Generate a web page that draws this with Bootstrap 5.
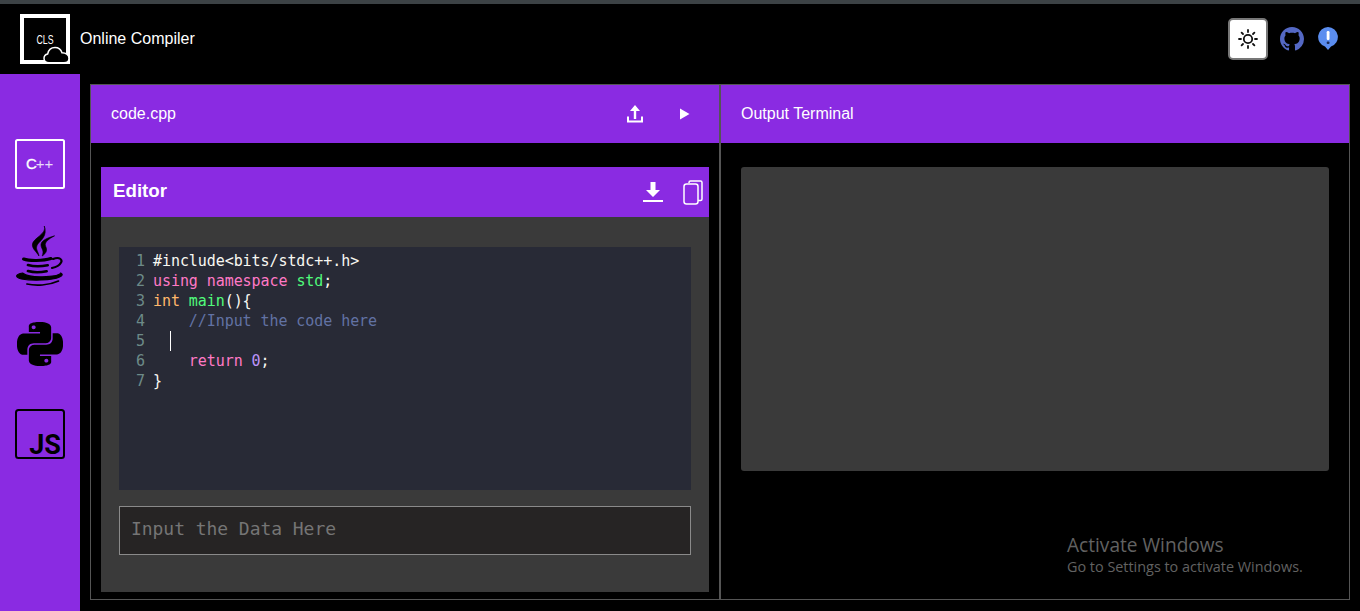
<!DOCTYPE html>
<html lang="en">
<head>
<meta charset="utf-8">
<title>Online Compiler</title>
<link href="https://cdn.jsdelivr.net/npm/bootstrap@5.3.0/dist/css/bootstrap.min.css" rel="stylesheet">
<style>
html,body{height:611px;overflow:hidden}
body{background:#000;color:#fff;font-family:"Liberation Sans",Arial,sans-serif;border-top:4px solid #3c4245}
.top-bar{height:70px;padding:0 21px 0 20px;background:#000}
.logo-box{width:50px;height:50px;display:block}
.brand-name{font-size:16px;color:#fff;margin-left:10px}
.theme-btn{width:40px;height:42px;background:#fff;border:2px solid #777;border-radius:5px;padding:0}
.head-gap{margin-left:12px}
.head-gap-b{margin-left:13px}
.side-rail{width:80px;background:#8a2be2;padding-top:65px}
.rail-item{height:90px}
.work-area{padding:10px 10px 11px 10px}
.pane{border:1px solid #555;width:630px;height:516px;position:relative}
.pane-head{height:58px;background:#8a2be2;font-size:16px;padding:0 20px}
.editor-box{margin:24px 10px 0;height:425px;background:#3a3a3a}
.editor-head{height:50px;background:#8a2be2;padding:0 6px 0 12px}
.editor-title{font-size:18.7px;font-weight:700;padding-bottom:2px}
.editor-body{padding:30px 18px 0}
.code-area{height:243px;background:#282a36;padding-top:4px;font-family:"DejaVu Sans Mono",monospace;font-size:15px;line-height:20px;letter-spacing:-.07px}
.gutter-nums{width:26px;margin-right:8px;text-align:right;color:#6d8a88}
.code-lines{color:#f8f8f2}
.code-line{height:20px;white-space:pre}
.tk-pink{color:#ff79c6}.tk-green{color:#50fa7b}.tk-orange{color:#ffb86c}.tk-comment{color:#6272a4}.tk-num{color:#bd93f9}
.caret-mark{display:inline-block;height:20px;border-left:1px solid #fff;margin-left:17px;vertical-align:top}
.data-input{display:block;width:100%;height:49px;margin-top:16px;background:#262424;border:1px solid #8a8a8a;border-radius:0;color:#fff;padding:0 11px 5px;font-family:"DejaVu Sans Mono",monospace;font-size:18px;letter-spacing:-.05px}
.data-input::placeholder{color:#757575;opacity:1}
.term-box{margin:24px 20px 0;height:304px;background:#3a3a3a;border-radius:3px}
.act-note{position:absolute;left:346px;top:449px;color:#626262;font-family:"Open Sans",sans-serif}
.act-one{font-size:19.1px;line-height:22px}
.act-two{font-size:14.4px;line-height:22px}
.icon-act{background:none;border:0;padding:0;line-height:0}
</style>
</head>
<body class="d-flex flex-column">
<header class="navbar top-bar flex-nowrap">
  <div class="d-flex align-items-center">
    <span class="logo-box">
      <svg width="50" height="50" viewBox="0 0 50 50">
        <rect x="2" y="2" width="46" height="46" fill="#000" stroke="#fff" stroke-width="4"/>
        <text x="25" y="30" font-size="13" fill="#fff" text-anchor="middle" font-family="Liberation Sans,sans-serif" textLength="17" lengthAdjust="spacingAndGlyphs">CLS</text>
        <path d="M29 48.800c-3 0-5-1.900-5-4.500 0-2.300 1.500-4 3.700-4.400.8-4 3.800-6.400 7.300-6.400 3.400 0 6 2 7 5.200 3.600-.1 7 2.300 7 5.500 0 2.700-2 4.600-5 4.600z" fill="#000" stroke="#fff" stroke-width="1.500"/>
      </svg>
    </span>
    <span class="brand-name">Online Compiler</span>
  </div>
  <div class="d-flex align-items-center">
    <button class="theme-btn d-flex align-items-center justify-content-center" aria-label="Theme">
      <svg width="20" height="20" viewBox="0 0 20 20" fill="none" stroke="#111" stroke-width="1.800" stroke-linecap="round"><circle cx="10" cy="10" r="4.200"/><path d="M10 1v2M10 17v2M1 10h2M17 10h2M3.600 3.600 5 5M15 15l1.400 1.400M3.600 16.400 5 15M15 5l1.400-1.400"/></svg>
    </button>
    <svg class="head-gap" width="24" height="24" viewBox="0 0 16 16" fill="#5468c4"><path d="M8 0C3.580 0 0 3.580 0 8c0 3.540 2.290 6.530 5.470 7.590.4.070.55-.17.55-.38 0-.19-.01-.82-.01-1.490-2.010.37-2.530-.49-2.690-.94-.09-.23-.48-.94-.82-1.130-.28-.15-.68-.52-.01-.53.63-.01 1.080.58 1.230.82.72 1.210 1.870.87 2.330.66.070-.52.28-.87.51-1.070-1.780-.2-3.640-.89-3.640-3.950 0-.87.31-1.590.82-2.150-.08-.2-.36-1.020.08-2.120 0 0 .67-.21 2.200.82.64-.18 1.320-.27 2-.27.68 0 1.360.09 2 .27 1.530-1.040 2.200-.82 2.200-.82.44 1.100.16 1.920.08 2.120.51.56.82 1.270.82 2.150 0 3.070-1.870 3.750-3.650 3.950.29.25.54.73.54 1.480 0 1.070-.01 1.930-.01 2.200 0 .21.15.46.55.38A8.013 8.013 0 0016 8c0-4.420-3.580-8-8-8z"/></svg>
    <svg class="head-gap-b" width="22" height="26" viewBox="0 0 22 26"><path d="M11 1a10 10 0 0 1 3 19.500L11 24l-3-3.500A10 10 0 0 1 11 1z" fill="#5b8def"/><rect x="9.700" y="5" width="2.800" height="9" rx="1.200" fill="#fff"/><rect x="9.700" y="15.500" width="2.800" height="2.600" rx="1" fill="#1b2a55"/></svg>
  </div>
</header>
<main class="d-flex flex-grow-1">
  <nav class="side-rail d-flex flex-column align-items-center">
    <div class="rail-item d-flex justify-content-center align-items-start">
      <svg width="50" height="50" viewBox="0 0 50 50"><rect x="1" y="1" width="48" height="48" rx="1.500" fill="none" stroke="#fff" stroke-width="2"/><text x="11" y="30" fill="#fff" stroke="#fff" stroke-width=".3" font-family="Liberation Sans,sans-serif"><tspan font-size="15">C</tspan><tspan font-size="15" dx="-1" fill="#e9d9fa" stroke="none">++</tspan></text></svg>
    </div>
    <div class="rail-item d-flex justify-content-center align-items-start" style="margin-top:-3px">
      <svg width="48" height="60" viewBox="1 0 44 60" preserveAspectRatio="none" fill="none" stroke="#000" stroke-linecap="round"><path d="M27 0c3 8-11 12-11 19 0 4 4 7 6 11-.5-5-4-7-1-12 3-4 9-8 6-18z" fill="#000" stroke-width=".6"/><path d="M36 10c-7 2-13 5-12 10 .6 3 3 5 1 10 4-3 5-6 3-10-1-4 3-7 8-10z" fill="#000" stroke-width=".6"/><path d="M8 33c5 2 18 2 25-.5" stroke-width="3"/><path d="M35 33c6-3 9 1 7 4-1 2-4 4-8 5" stroke-width="2"/><path d="M12 39c5 1.500 12 1.500 18 .3" stroke-width="2.600"/><path d="M12 45c5 1.500 11 1.500 17 .2" stroke-width="2.600"/><path d="M7 47c-6 1-8 4-1 6 10 2 28 1.500 35-2 3-1.300 3-3 1-4-1 2-8 3.500-17 3.800-7 .2-14-.8-18-3.800z" fill="#000" stroke-width="1"/><path d="M11 58c8 2 20 1.500 29-3" stroke-width="1.600"/></svg>
    </div>
    <div class="rail-item d-flex justify-content-center align-items-start" style="margin-top:6px">
      <svg width="46" height="44" viewBox="0 0 24 24" preserveAspectRatio="none" fill="#000"><path d="M14.250.18l.9.2.73.26.59.3.45.32.34.34.25.34.16.33.1.3.04.26.02.2-.01.13V8.500l-.05.63-.13.55-.21.46-.26.38-.3.31-.33.25-.35.19-.35.14-.33.1-.3.07-.26.04-.21.02H8.770l-.69.05-.59.14-.5.22-.41.27-.33.32-.27.35-.2.36-.15.37-.1.35-.07.32-.04.27-.02.21v3.060H3.170l-.21-.03-.28-.07-.32-.12-.35-.18-.36-.26-.36-.36-.35-.46-.32-.59-.28-.73-.21-.88-.14-1.050-.05-1.230.06-1.220.16-1.040.24-.87.32-.71.36-.57.4-.44.42-.33.42-.24.4-.16.36-.1.32-.05.24-.01h.16l.06.01h8.160v-.83H6.180l-.01-2.750-.02-.37.05-.34.11-.31.17-.28.25-.26.31-.23.38-.2.44-.18.51-.15.58-.12.64-.1.71-.06.77-.04.84-.02 1.270.05zm-6.300 1.980l-.23.33-.08.41.08.41.23.34.33.22.41.09.41-.09.33-.22.23-.34.08-.41-.08-.41-.23-.33-.33-.22-.41-.09-.41.09zm13.090 3.950l.28.06.32.12.35.18.36.27.36.35.35.47.32.59.28.73.21.88.14 1.040.05 1.230-.06 1.230-.16 1.040-.24.86-.32.71-.36.57-.4.45-.42.33-.42.24-.4.16-.36.09-.32.05-.24.02-.16-.01h-8.220v.82h5.840l.01 2.760.02.36-.05.34-.11.31-.17.29-.25.25-.31.24-.38.2-.44.17-.51.15-.58.13-.64.09-.71.07-.77.04-.84.01-1.270-.04-1.070-.14-.9-.2-.73-.25-.59-.3-.45-.33-.34-.34-.25-.34-.16-.33-.1-.3-.04-.25-.02-.2.01-.13v-5.340l.05-.64.13-.54.21-.46.26-.38.3-.32.33-.24.35-.2.35-.14.33-.1.3-.06.26-.04.21-.02.13-.01h5.840l.69-.05.59-.14.5-.21.41-.28.33-.32.27-.35.2-.36.15-.36.1-.35.07-.32.04-.28.02-.21V6.070h2.090l.14.01zm-6.470 14.250l-.23.33-.08.41.08.41.23.33.33.23.41.08.41-.08.33-.23.23-.33.08-.41-.08-.41-.23-.33-.33-.23-.41-.08-.41.08z"/></svg>
    </div>
    <div class="rail-item d-flex justify-content-center align-items-start" style="margin-top:-3px">
      <svg width="50" height="50" viewBox="0 0 50 50"><rect x="1" y="1" width="48" height="48" rx="2.500" fill="none" stroke="#000" stroke-width="2"/><text x="30" y="44.500" font-size="27" font-weight="700" fill="#000" text-anchor="middle" font-family="Roboto,sans-serif">JS</text></svg>
    </div>
  </nav>
  <div class="work-area d-flex">
    <section class="pane">
      <div class="pane-head d-flex align-items-center justify-content-between">
        <span>code.cpp</span>
        <div class="d-flex align-items-center" style="gap:36px;margin-right:8px">
          <button class="icon-act" aria-label="Upload"><svg width="16" height="18" viewBox="0 0 16 18" fill="#fff"><path d="M8 0l5 6H9.200v8H6.800V6H3z"/><path d="M0 11.500h2v4h12v-4h2v6H0z"/></svg></button>
          <button class="icon-act" aria-label="Run"><svg width="12" height="12" viewBox="0 0 12 12" fill="#fff"><path d="M1 .5 10.500 6 1 11.500z"/></svg></button>
        </div>
      </div>
      <div class="editor-box">
        <div class="editor-head d-flex align-items-center justify-content-between">
          <span class="editor-title">Editor</span>
          <div class="d-flex align-items-center" style="gap:19px">
            <button class="icon-act" aria-label="Download"><svg width="22" height="22" viewBox="0 0 22 22" fill="#fff"><path d="M8.500 1h5v8h4.500L11 16 4 9h4.500z"/><rect x="1" y="19" width="20" height="2"/></svg></button>
            <button class="icon-act" aria-label="Copy"><svg width="20" height="25" viewBox="0 0 20 25" fill="none" stroke="#fff" stroke-width="1.500"><path d="M6 3V2.500A1.500 1.500 0 0 1 7.500 1h10A1.500 1.500 0 0 1 19 2.500V19a1.500 1.500 0 0 1-1.500 1.500H15"/><rect x="1" y="4" width="14" height="20" rx="2.500"/></svg></button>
          </div>
        </div>
        <div class="editor-body">
          <div class="code-area d-flex">
            <div class="gutter-nums"><div>1</div><div>2</div><div>3</div><div>4</div><div>5</div><div>6</div><div>7</div></div>
            <div class="code-lines">
              <div class="code-line">#include&lt;bits/stdc++.h&gt;</div>
              <div class="code-line"><span class="tk-pink">using</span> <span class="tk-pink">namespace</span> <span class="tk-green">std</span>;</div>
              <div class="code-line"><span class="tk-orange">int</span> <span class="tk-green">main</span>(){</div>
              <div class="code-line">    <span class="tk-comment">//Input the code here</span></div>
              <div class="code-line"><span class="caret-mark"></span></div>
              <div class="code-line">    <span class="tk-pink">return</span> <span class="tk-num">0</span>;</div>
              <div class="code-line">}</div>
            </div>
          </div>
          <input class="data-input" type="text" placeholder="Input the Data Here">
        </div>
      </div>
    </section>
    <section class="pane">
      <div class="pane-head d-flex align-items-center"><span>Output Terminal</span></div>
      <div class="term-box"></div>
      <div class="act-note"><div class="act-one">Activate Windows</div><div class="act-two">Go to Settings to activate Windows.</div></div>
    </section>
  </div>
</main>
<script src="https://cdn.jsdelivr.net/npm/bootstrap@5.3.0/dist/js/bootstrap.bundle.min.js"></script>
</body>
</html>
